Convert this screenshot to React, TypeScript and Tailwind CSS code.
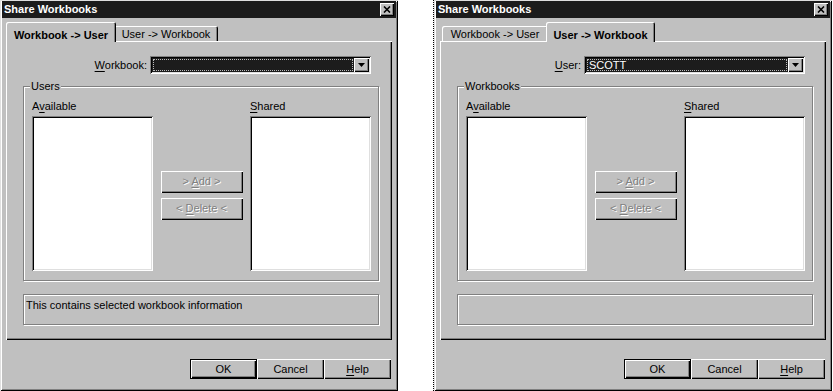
import React from 'react'

// Win95 style bevels
const frame = 'shadow-[inset_1px_1px_#dfdfdf,inset_-1px_-1px_#000,inset_2px_2px_#fff,inset_-2px_-2px_#808080]'
const raised = 'shadow-[inset_1px_1px_#fff,inset_-1px_-1px_#000,inset_-2px_-2px_#808080]'
const sunken = 'shadow-[inset_1px_1px_#808080,inset_-1px_-1px_#fff,inset_2px_2px_#000,inset_-2px_-2px_#dfdfdf]'
const etched = 'border border-[#808080] shadow-[inset_1px_1px_#fff,1px_1px_#fff]'
const disabled = 'text-[#808080] [text-shadow:1px_1px_0_#fff]'

const U = ({ children }: { children: React.ReactNode }) => (
  <span className="underline underline-offset-[2px] decoration-1">{children}</span>
)

function Combo({ value }: { value?: string }) {
  return (
    <div className={`w-[221px] h-[18px] bg-white p-[2px] flex ${sunken}`}>
      <div className="flex-1 bg-[#1c1c1c] p-[1px]">
        <div className="h-full border border-dotted border-[#bbb] text-white leading-[10px] pl-[1px]">
          {value}
        </div>
      </div>
      <div className={`w-[15px] bg-[#c0c0c0] flex items-center justify-center ${raised}`}>
        <svg width="7" height="4" viewBox="0 0 7 4">
          <polygon points="0,0 7,0 3.5,4" fill="#000" />
        </svg>
      </div>
    </div>
  )
}

function Dialog({ active, fieldLabel, value, group, info }: {
  active: 0 | 1
  fieldLabel: React.ReactNode
  value?: string
  group: string
  info: string
}) {
  const tabs = ['Workbook -> User', 'User -> Workbook']
  return (
    <div className={`w-[398px] h-[391px] shrink-0 bg-[#c0c0c0] pt-[1px] px-[2px] flex flex-col ${frame}`}>
      {/* title bar */}
      <div className="h-[17px] bg-[#1c1c1c] flex items-center justify-between pl-[2px] pr-[2px]">
        <span className="text-white font-bold text-[11px] leading-[13px]">Share Workbooks</span>
        <div className={`w-[14px] h-[13px] bg-[#c0c0c0] flex items-center justify-center ${raised}`}>
          <svg width="8" height="7" viewBox="0 0 8 7">
            <path d="M1 0.5 L7 6.5 M7 0.5 L1 6.5" stroke="#000" strokeWidth="1.6" />
          </svg>
        </div>
      </div>

      {/* tabs */}
      <div className="relative z-10 mt-[4px] ml-[4px] h-[20px] flex items-end pl-[2px]">
        {tabs.map((t, i) =>
          i === active ? (
            <div
              key={t}
              className={`${i === 0 ? 'w-[110px]' : 'w-[109px]'} h-[20px] -mx-[2px] relative z-10 bg-[#c0c0c0] rounded-t-[2px] text-center font-bold pt-[7px] leading-[13px] shadow-[inset_1px_1px_#fff,inset_-1px_0_#000,inset_-2px_0_#808080]`}
            >
              {t}
            </div>
          ) : (
            <div
              key={t}
              className={`${i === 0 ? 'w-[106px]' : 'w-[104px]'} h-[15px] mb-[1px] bg-[#c0c0c0] rounded-t-[2px] text-center pt-[2px] leading-[13px] shadow-[inset_1px_1px_#fff,inset_-1px_0_#000,inset_-2px_0_#808080]`}
            >
              {t}
            </div>
          )
        )}
      </div>

      {/* tab panel */}
      <div className={`ml-[4px] -mt-[1px] w-[386px] h-[299px] pt-[15px] shadow-[inset_1px_1px_#fff,inset_-1px_-1px_#000,inset_-2px_-2px_#808080]`}>
        <div className="flex items-center h-[18px]">
          <div className="w-[144px] text-right pr-[3px]">{fieldLabel}</div>
          <Combo value={value} />
        </div>

        <div className={`relative ml-[17px] mt-[12px] w-[356px] h-[195px] ${etched}`}>
          <span className="absolute -top-[7px] left-[6px] px-[1px] bg-[#c0c0c0] leading-[13px]">{group}</span>
          <div className="flex pl-[8px] pt-[13px]">
            <div className="w-[121px]">
              <div className="h-[16px] leading-[13px]">A<U>v</U>ailable</div>
              <div className={`h-[155px] bg-white ${sunken}`} />
            </div>
            <div className="w-[97px] pt-[16px]">
              <div className="h-[155px] flex flex-col items-center justify-center gap-[5px] pt-[3px]">
                <div className={`w-[82px] h-[22px] flex items-center justify-center ${raised} ${disabled}`}>
                  <span>&gt; <U>A</U>dd &gt;</span>
                </div>
                <div className={`w-[82px] h-[22px] flex items-center justify-center ${raised} ${disabled}`}>
                  <span>&lt; <U>D</U>elete &lt;</span>
                </div>
              </div>
            </div>
            <div className="w-[121px]">
              <div className="h-[16px] leading-[13px]"><U>S</U>hared</div>
              <div className={`h-[155px] bg-white ${sunken}`} />
            </div>
          </div>
        </div>

        <div className={`ml-[17px] mt-[13px] w-[356px] h-[31px] pt-[4px] pl-[2px] leading-[13px] ${etched}`}>
          {info}
        </div>
      </div>

      {/* buttons */}
      <div className="mt-[19px] flex justify-end mr-[5px]">
        <div className="w-[67px] h-[20px] border border-black">
          <div className={`w-full h-full flex items-center justify-center ${raised}`}>OK</div>
        </div>
        <div className={`w-[67px] h-[20px] flex items-center justify-center ${raised}`}>Cancel</div>
        <div className={`w-[67px] h-[20px] flex items-center justify-center ${raised}`}>
          <span><U>H</U>elp</span>
        </div>
      </div>
    </div>
  )
}

export default function App() {
  return (
    <div className="w-[833px] h-[391px] bg-white flex overflow-hidden text-[11px] text-black font-['Liberation_Sans',Arial,sans-serif]">
      <Dialog
        active={0}
        fieldLabel={<><U>W</U>orkbook:</>}
        group="Users"
        info="This contains selected workbook information"
      />
      <div className="w-[35px] shrink-0" />
      <div className="w-px h-full shrink-0 border-l border-dotted border-black" />
      <Dialog
        active={1}
        fieldLabel={<><U>U</U>ser:</>}
        value="SCOTT"
        group="Workbooks"
        info=""
      />
    </div>
  )
}
